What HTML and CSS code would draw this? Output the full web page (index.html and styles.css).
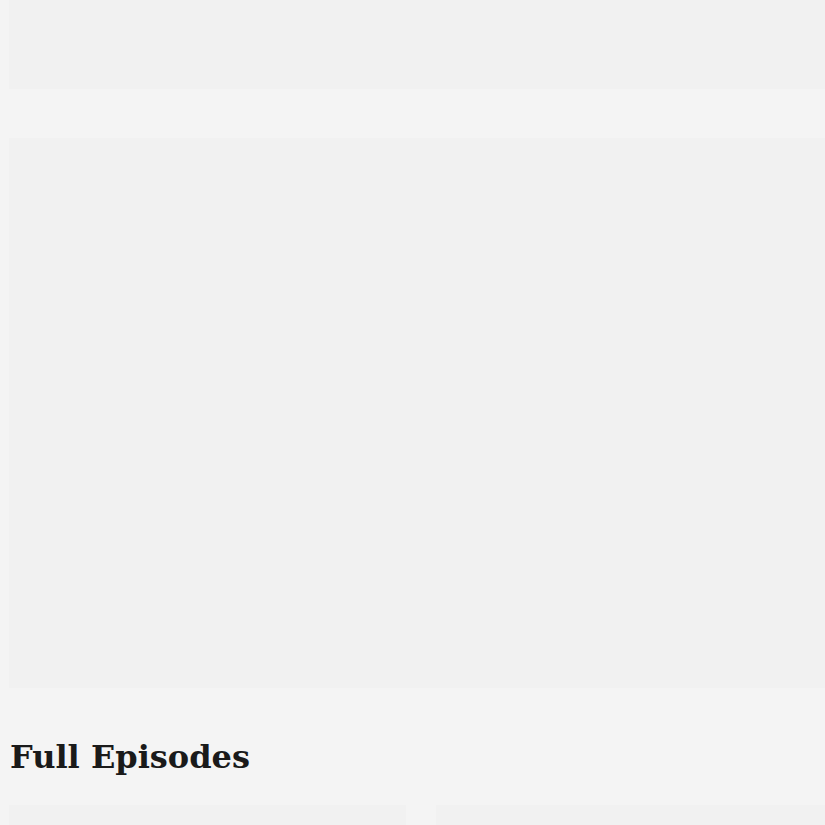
FILE: index.html
```html
<!DOCTYPE html>
<html>
<head>
<meta charset="utf-8">
<link rel="stylesheet" href="styles.css">
</head>
<body>
<div class="page">
  <div class="ad-top"></div>
  <div class="hero"></div>
  <h2 class="section-title">Full Episodes</h2>
  <div class="episodes">
    <div class="episode"></div>
    <div class="episode"></div>
  </div>
</div>
</body>
</html>
```
FILE: styles.css
```css
html, body {
  margin: 0;
  padding: 0;
  background: #f4f4f4;
  overflow: hidden;
}
.page {
  padding-left: 9px;
  width: 1000px;
}
.ad-top {
  height: 89px;
  background: #f1f1f1;
}
.hero {
  margin-top: 49px;
  height: 550px;
  background: #f1f1f1;
}
.section-title {
  font-family: "DejaVu Serif", Georgia, serif;
  font-weight: bold;
  font-size: 32px;
  color: #1a1a1a;
  margin: 49px 0 28px 1px;
  line-height: 40px;
}
.episodes {
  display: grid;
  grid-template-columns: 397px 397px;
  column-gap: 30px;
}
.episode {
  height: 200px;
  background: #f1f1f1;
}
```
